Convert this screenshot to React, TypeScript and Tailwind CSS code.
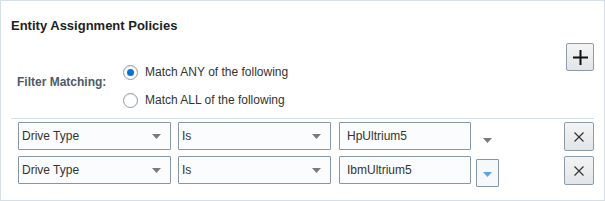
import React from 'react';

const font = { fontFamily: '"Liberation Sans", Arial, sans-serif' };

function Caret({ color }: { color: string }) {
  return (
    <svg width="9" height="5" viewBox="0 0 9 5">
      <polygon points="0,0 9,0 4.5,5" fill={color} />
    </svg>
  );
}

function Select({ value }: { value: string }) {
  return (
    <div className="w-[153px] h-[28px] border border-[#8696a4] rounded-[1px] bg-[#fbfcfd] flex items-center justify-between pl-[3px] pr-[9px] text-[12px] text-[#333]">
      <span>{value}</span>
      <Caret color="#7a7a7a" />
    </div>
  );
}

function Row({ value, focused }: { value: string; focused?: boolean }) {
  return (
    <div className="flex items-start h-[28px]">
      <Select value="Drive Type" />
      <div className="ml-[7px]">
        <Select value="Is" />
      </div>
      <div className="ml-[8px] w-[132px] h-[28px] border border-[#8696a4] rounded-[1px] bg-[#fbfcfd] flex items-center pl-[7px] text-[12px] text-[#333]">
        {value}
      </div>
      <div
        className={
          'ml-[5px] mt-[3px] w-[23px] h-[28px] rounded-[1px] flex items-center justify-center pt-[2px] border ' +
          (focused ? 'border-[#8696a4] bg-[#f6f9fb]' : 'border-transparent')
        }
      >
        <Caret color={focused ? '#5aa3e6' : '#7a7a7a'} />
      </div>
      <button className="ml-auto w-[30px] h-[29px] border border-[#8e9caa] rounded-[2px] bg-gradient-to-b from-[#f3f4f5] to-[#e2e5e8] flex items-center justify-center">
        <svg width="10" height="10" viewBox="0 0 10 10">
          <path d="M0.5 0.5 L9.5 9.5 M9.5 0.5 L0.5 9.5" stroke="#333" strokeWidth="1.2" />
        </svg>
      </button>
    </div>
  );
}

function Radio({ checked, label }: { checked?: boolean; label: string }) {
  return (
    <div className="h-[20px] flex items-center">
      <div className="w-[15px] h-[15px] rounded-full border border-[#8d9aa6] bg-white flex items-center justify-center shadow-[inset_0_1px_1px_rgba(0,0,0,0.08)]">
        {checked ? <div className="w-[7px] h-[7px] rounded-full bg-[#0572ce]" /> : null}
      </div>
      <span className="ml-[7px] text-[12px] text-[#333]">{label}</span>
    </div>
  );
}

export default function App() {
  return (
    <div
      className="w-[605px] h-[201px] border border-[#d6dfe6] bg-white px-[10px] overflow-hidden"
      style={font}
    >
      <h1 className="pt-[17px] text-[13px] leading-[16px] font-bold text-[#222]">
        Entity Assignment Policies
      </h1>

      <div className="flex justify-between">
        <div className="flex items-start pl-[6px]">
          <div className="w-[106px] mt-[40px] text-[12px] leading-[16px] font-bold text-[#4f5a65]">
            Filter Matching:
          </div>
          <div className="mt-[28px] flex flex-col gap-[8px]">
            <Radio checked label="Match ANY of the following" />
            <Radio label="Match ALL of the following" />
          </div>
        </div>
        <button className="mt-[9px] w-[28px] h-[28px] border border-[#8e9caa] rounded-[2px] bg-gradient-to-b from-[#f3f4f5] to-[#e2e5e8] flex items-center justify-center">
          <svg width="15" height="15" viewBox="0 0 15 15">
            <path d="M7.5 0 V15 M0 7.5 H15" stroke="#111" strokeWidth="2" />
          </svg>
        </button>
      </div>

      <div className="mt-[8px] border-t border-[#d6dfe6]" />

      <div className="pl-[7px] pt-[3px] flex flex-col gap-[6px]">
        <Row value="HpUltrium5" />
        <Row value="IbmUltrium5" focused />
      </div>
    </div>
  );
}
